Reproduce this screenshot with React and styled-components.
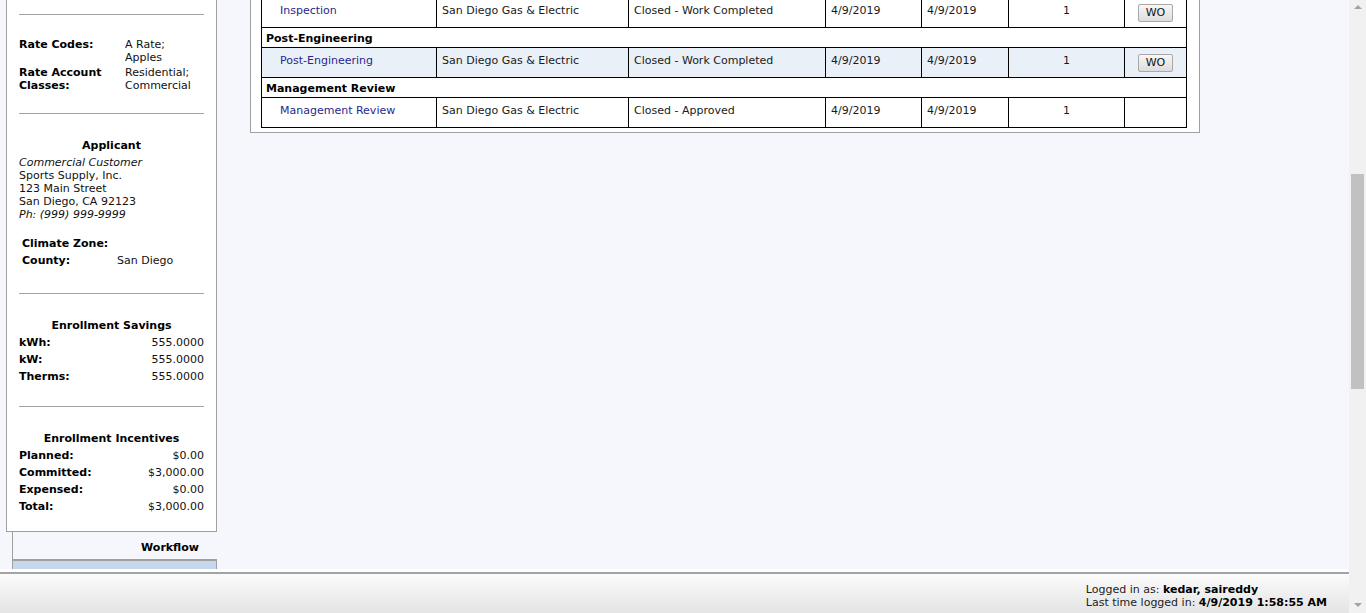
import React from "react";
import styled, { createGlobalStyle } from "styled-components";

const GlobalStyle = createGlobalStyle`
  html, body { margin: 0; padding: 0; height: 100%; overflow: hidden; }
  body {
    background: #f5f7fd;
    font-family: "DejaVu Sans", Verdana, sans-serif;
    font-size: 11px;
    color: #111;
  }
`;

const Frame = styled.div`
  display: flex;
  height: 100vh;
  overflow: hidden;
`;

const Viewport = styled.div`
  flex: 1;
  display: flex;
  flex-direction: column;
  min-width: 0;
`;

const Content = styled.div`
  height: 569px;
  overflow: hidden;
  display: flex;
  align-items: flex-start;
  gap: 33px;
  padding-left: 6px;
`;

const Sidebar = styled.div`
  width: 211px;
  flex: none;
  display: flex;
  flex-direction: column;
`;

const InfoPanel = styled.div`
  background: #fff;
  border: 1px solid #a0a0a0;
  border-top: none;
  padding: 14px 12px 0 12px;
`;

const Rule = styled.div`
  height: 1px;
  background: #a3a3a3;
`;

const Section = styled.div`
  padding-top: ${(p) => p.$pt}px;
  padding-bottom: ${(p) => p.$pb}px;
`;

const RateGrid = styled.div`
  display: grid;
  grid-template-columns: 106px 1fr;
  row-gap: 2px;
  line-height: 13px;
`;

const Label = styled.div`
  font-weight: bold;
  color: #000;
`;

const Value = styled.div`
  color: #111;
`;

const Heading = styled.div`
  font-weight: bold;
  color: #000;
  text-align: center;
  line-height: 17px;
  margin-bottom: ${(p) => p.$mb || 0}px;
`;

const AddressLine = styled.div`
  line-height: 13px;
  font-style: ${(p) => (p.$italic ? "italic" : "normal")};
`;

const ZoneGrid = styled.div`
  margin-top: 14px;
  padding-left: 3px;
  display: grid;
  grid-template-columns: 95px 1fr;
  grid-auto-rows: 17px;
  align-items: center;
`;

const AmountRow = styled.div`
  display: flex;
  justify-content: space-between;
  line-height: 17px;
`;

const WorkflowTab = styled.div`
  margin-left: 6px;
  height: 27px;
  padding-top: 3px;
  box-sizing: border-box;
  border-left: 1px solid #a0a0a0;
  display: flex;
  align-items: center;
  justify-content: flex-end;
  padding-right: 18px;
  font-weight: bold;
  color: #000;
`;

const TabBody = styled.div`
  margin-left: 6px;
  height: 30px;
  background: #c6d8ee;
  border: 1px solid #a0a0a0;
  border-top: 2px solid #a0a0a0;
`;

const MainPanel = styled.div`
  width: 950px;
  box-sizing: border-box;
  flex: none;
  background: #fff;
  border: 1px solid #a0a0a0;
  border-top: none;
  padding: 0 12px 4px 10px;
`;

const Table = styled.table`
  margin-top: -3px;
  width: 926px;
  table-layout: fixed;
  border-collapse: collapse;
  border: 1px solid #000;
  font-size: 11px;
`;

const GroupRow = styled.tr`
  height: 20px;
`;

const GroupCell = styled.td`
  border: 1px solid #000;
  padding: 2px 4px 0;
  font-weight: bold;
  color: #000;
  line-height: 13px;
`;

const DataRow = styled.tr`
  height: 30px;
  background: ${(p) => (p.$alt ? "#eaf0f8" : "#fff")};
`;

const Cell = styled.td`
  border: 1px solid #000;
  padding: 0 5px ${(p) => (p.$control ? 0 : 4)}px;
  vertical-align: middle;
  text-align: ${(p) => p.$align || "left"};
  color: #1a1a1a;
  white-space: nowrap;
  line-height: 13px;
`;

const StepLink = styled.a`
  color: #28288f;
  text-decoration: none;
  padding-left: 13px;
  cursor: pointer;
`;

const WOButton = styled.button`
  width: 35px;
  height: 18px;
  padding: 0;
  font-family: "DejaVu Sans", Verdana, sans-serif;
  font-size: 11px;
  color: #111;
  background: linear-gradient(#f7f7f7, #dddddd);
  border: 1px solid #a9a9a9;
  border-radius: 2px;
  vertical-align: middle;
`;

const Footer = styled.div`
  height: 44px;
  box-sizing: border-box;
  background: linear-gradient(
    to bottom,
    #ffffff 0,
    #ffffff 3px,
    #a3a3a3 3px,
    #a3a3a3 5px,
    #fbfbfb 5px,
    #e4e4e4 100%
  );
  display: flex;
  justify-content: flex-end;
  padding: 14px 22px 0 0;
  line-height: 13px;
  color: #222;
`;

const FooterBlock = styled.div``;

const Strong = styled.b`
  color: #000;
`;

const Scrollbar = styled.div`
  width: 17px;
  flex: none;
  background: #f1f1f1;
  display: flex;
  flex-direction: column;
  align-items: center;
`;

const Arrow = styled.div`
  width: 0;
  height: 0;
  border-left: 4px solid transparent;
  border-right: 4px solid transparent;
  ${(p) =>
    p.$down
      ? "border-top: 4px solid #a3a3a3; margin-top: auto; margin-bottom: 6px;"
      : "border-bottom: 4px solid #a3a3a3; margin-top: 5px;"}
`;

const Thumb = styled.div`
  width: 13px;
  height: 215px;
  margin-top: 165px;
  margin-left: 2px;
  align-self: flex-start;
  background: #c1c1c1;
`;

const steps = [
  { group: null, name: "Inspection", status: "Closed - Work Completed", wo: true, alt: false },
  { group: "Post-Engineering", name: "Post-Engineering", status: "Closed - Work Completed", wo: true, alt: true },
  { group: "Management Review", name: "Management Review", status: "Closed - Approved", wo: false, alt: false },
];

export default function App() {
  return (
    <>
      <GlobalStyle />
      <Frame>
        <Viewport>
          <Content>
            <Sidebar>
              <InfoPanel>
                <Rule />
                <Section $pt={23} $pb={21}>
                  <RateGrid>
                    <Label>Rate Codes:</Label>
                    <Value>
                      A Rate;
                      <br />
                      Apples
                    </Value>
                    <Label>
                      Rate Account
                      <br />
                      Classes:
                    </Label>
                    <Value>
                      Residential;
                      <br />
                      Commercial
                    </Value>
                  </RateGrid>
                </Section>
                <Rule />
                <Section $pt={23} $pb={24}>
                  <Heading $mb={2}>Applicant</Heading>
                  <AddressLine $italic>Commercial Customer</AddressLine>
                  <AddressLine>Sports Supply, Inc.</AddressLine>
                  <AddressLine>123 Main Street</AddressLine>
                  <AddressLine>San Diego, CA 92123</AddressLine>
                  <AddressLine $italic>Ph: (999) 999-9999</AddressLine>
                  <ZoneGrid>
                    <Label>Climate Zone:</Label>
                    <Value />
                    <Label>County:</Label>
                    <Value>San Diego</Value>
                  </ZoneGrid>
                </Section>
                <Rule />
                <Section $pt={23} $pb={21}>
                  <Heading>Enrollment Savings</Heading>
                  <AmountRow>
                    <Label>kWh:</Label>
                    <Value>555.0000</Value>
                  </AmountRow>
                  <AmountRow>
                    <Label>kW:</Label>
                    <Value>555.0000</Value>
                  </AmountRow>
                  <AmountRow>
                    <Label>Therms:</Label>
                    <Value>555.0000</Value>
                  </AmountRow>
                </Section>
                <Rule />
                <Section $pt={23} $pb={16}>
                  <Heading>Enrollment Incentives</Heading>
                  <AmountRow>
                    <Label>Planned:</Label>
                    <Value>$0.00</Value>
                  </AmountRow>
                  <AmountRow>
                    <Label>Committed:</Label>
                    <Value>$3,000.00</Value>
                  </AmountRow>
                  <AmountRow>
                    <Label>Expensed:</Label>
                    <Value>$0.00</Value>
                  </AmountRow>
                  <AmountRow>
                    <Label>Total:</Label>
                    <Value>$3,000.00</Value>
                  </AmountRow>
                </Section>
              </InfoPanel>
              <WorkflowTab>Workflow</WorkflowTab>
              <TabBody />
            </Sidebar>
            <MainPanel>
              <Table>
                <colgroup>
                  <col style={{ width: 175 }} />
                  <col style={{ width: 192 }} />
                  <col style={{ width: 197 }} />
                  <col style={{ width: 96 }} />
                  <col style={{ width: 87 }} />
                  <col style={{ width: 116 }} />
                  <col style={{ width: 62 }} />
                </colgroup>
                <tbody>
                  {steps.map((s) => (
                    <React.Fragment key={s.name}>
                      {s.group && (
                        <GroupRow>
                          <GroupCell colSpan={7}>{s.group}</GroupCell>
                        </GroupRow>
                      )}
                      <DataRow $alt={s.alt}>
                        <Cell>
                          <StepLink>{s.name}</StepLink>
                        </Cell>
                        <Cell>San Diego Gas &amp; Electric</Cell>
                        <Cell>{s.status}</Cell>
                        <Cell>4/9/2019</Cell>
                        <Cell>4/9/2019</Cell>
                        <Cell $align="center">1</Cell>
                        <Cell $align="center" $control>
                          {s.wo && <WOButton>WO</WOButton>}
                        </Cell>
                      </DataRow>
                    </React.Fragment>
                  ))}
                </tbody>
              </Table>
            </MainPanel>
          </Content>
          <Footer>
            <FooterBlock>
              <div>
                Logged in as: <Strong>kedar, saireddy</Strong>
              </div>
              <div>
                Last time logged in: <Strong>4/9/2019 1:58:55 AM</Strong>
              </div>
            </FooterBlock>
          </Footer>
        </Viewport>
        <Scrollbar>
          <Arrow />
          <Thumb />
          <Arrow $down />
        </Scrollbar>
      </Frame>
    </>
  );
}
